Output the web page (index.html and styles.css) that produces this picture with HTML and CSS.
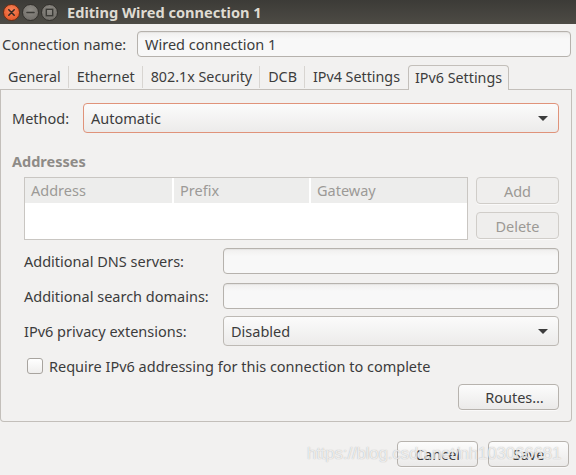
FILE: index.html
```html
<!DOCTYPE html>
<html>
<head>
<meta charset="utf-8">
<title>Editing Wired connection 1</title>
<link rel="stylesheet" href="styles.css">
</head>
<body>
<div class="window">
  <div class="titlebar">
    <div class="wm-buttons">
      <span class="wm close"><svg width="17" height="17" viewBox="0 0 17 17"><path d="M5.8 5.8 L11.2 11.2 M11.2 5.8 L5.8 11.2" stroke="#3a2a22" stroke-width="1.6" stroke-linecap="round"/></svg></span>
      <span class="wm"><svg width="17" height="17" viewBox="0 0 17 17"><path d="M5 8.5 H12" stroke="#3b3a36" stroke-width="1.6" stroke-linecap="round"/></svg></span>
      <span class="wm"><svg width="17" height="17" viewBox="0 0 17 17"><rect x="5.3" y="5.3" width="6.4" height="6.4" fill="none" stroke="#3b3a36" stroke-width="1.4"/></svg></span>
    </div>
    <div class="title">Editing Wired connection 1</div>
  </div>

  <div class="content">
    <div class="name-row">
      <span class="name-label">Connection name:</span>
      <div class="entry name-entry">Wired connection 1</div>
    </div>

    <div class="tabs">
      <div class="tab">General</div>
      <span class="tab-sep"></span>
      <div class="tab">Ethernet</div>
      <span class="tab-sep"></span>
      <div class="tab">802.1x Security</div>
      <span class="tab-sep"></span>
      <div class="tab">DCB</div>
      <span class="tab-sep"></span>
      <div class="tab">IPv4 Settings</div>
      <div class="tab active">IPv6 Settings</div>
    </div>

    <div class="panel">
      <div class="method-row">
        <span class="method-label">Method:</span>
        <div class="combo focused"><span>Automatic</span><span class="arrow"></span></div>
      </div>

      <div class="section-title">Addresses</div>

      <div class="addresses">
        <div class="table">
          <div class="thead">
            <div class="th col-addr">Address</div>
            <div class="th col-prefix">Prefix</div>
            <div class="th col-gw">Gateway</div>
          </div>
          <div class="tbody"></div>
        </div>
        <div class="side-buttons">
          <div class="btn disabled">Add</div>
          <div class="btn disabled">Delete</div>
        </div>
      </div>

      <div class="form-grid">
        <span class="form-label">Additional DNS servers:</span>
        <div class="entry"></div>
        <span class="form-label">Additional search domains:</span>
        <div class="entry"></div>
        <span class="form-label">IPv6 privacy extensions:</span>
        <div class="combo"><span>Disabled</span><span class="arrow"></span></div>
      </div>

      <div class="check-row">
        <span class="checkbox"></span>
        <span>Require IPv6 addressing for this connection to complete</span>
      </div>

      <div class="routes-row">
        <div class="btn routes">Routes…</div>
      </div>
    </div>

    <div class="dialog-buttons">
      <div class="btn dlg">Cancel</div>
      <div class="btn dlg">Save</div>
    </div>
  </div>
  <div class="watermark">https://blog.csdn.net/nh103066681</div>
</div>
</body>
</html>
```
FILE: styles.css
```css
* { box-sizing: border-box; }
html, body { margin: 0; padding: 0; }
body {
  width: 576px;
  height: 475px;
  overflow: hidden;
  background: #f2f1f0;
  font-family: "Noto Sans", "Open Sans", sans-serif;
  font-size: 14.5px;
  color: #3c3c3c;
}
.window { position: relative; width: 576px; height: 475px; overflow: hidden; }

.titlebar {
  height: 24px;
  background: linear-gradient(#3c3b37, #4d4b45);
  display: flex;
  align-items: center;
}
.wm-buttons { display: flex; gap: 2px; padding-left: 3px; }
.wm {
  width: 17px; height: 17px;
  border-radius: 50%;
  background: radial-gradient(circle at 50% 35%, #8f8c86, #6a6762);
  border: 1px solid #33312d;
  display: flex; align-items: center; justify-content: center;
}
.wm svg { display: block; margin: -1px; }
.wm.close { background: radial-gradient(circle at 50% 35%, #f7845a, #e2501f); border-color: #6b2d14; }
.title {
  margin-left: 9px;
  color: #dfdbd2;
  font-weight: bold;
  font-size: 14.6px;
}

.content { padding: 0 5px 0 0; }

.name-row {
  display: flex;
  align-items: center;
  margin-top: 7px;
  padding-left: 2px;
}
.name-label { width: 135px; }
.entry {
  height: 26px;
  border: 1px solid #b6b2ad;
  border-radius: 4px;
  background: linear-gradient(#f0efee, #f8f8f8 30%, #f8f8f8);
  box-shadow: inset 0 1px 1px rgba(0,0,0,0.05);
  padding: 0 7px;
  display: flex; align-items: center;
}
.name-entry { flex: 1; }

.tabs {
  display: flex;
  align-items: flex-end;
  margin-top: 8px;
  height: 25px;
  border-bottom: 1px solid #c3bfba;
  margin-right: -1px;
  font-size: 14.3px;
}
.tab {
  height: 24px;
  padding: 0 7px 1px 8px;
  display: flex; align-items: center;
}
.tab-sep { width: 1px; height: 22px; background: #d8d5d1; align-self: center; }
.tab.active {
  height: 25px;
  margin-bottom: -1px;
  margin-left: 1px;
  padding: 0 6px 1px 6px;
  border: 1px solid #c3bfba;
  border-bottom: none;
  border-radius: 4px 4px 0 0;
  background: #f2f1f0;
}

.panel {
  border: 1px solid #c3bfba;
  border-top: none;
  border-radius: 0 0 4px 4px;
  margin-right: -1px;
  padding: 13px 12px 11px 11px;
}

.method-row { display: flex; align-items: center; }
.method-label { width: 71px; }
.combo {
  flex: 1;
  height: 30px;
  border: 1px solid #bdb9b4;
  border-radius: 4px;
  background: linear-gradient(#fbfbfb, #ecebea);
  display: flex; align-items: center; justify-content: space-between;
  padding: 0 10px 0 7px;
}
.combo.focused { border-color: #e0937a; }
.arrow {
  width: 0; height: 0;
  border-left: 5px solid transparent;
  border-right: 5px solid transparent;
  border-top: 5px solid #3c3c3c;
}

.section-title {
  margin-top: 19px;
  line-height: 18px;
  font-weight: bold;
  color: #8e8b87;
}

.addresses {
  display: flex;
  gap: 8px;
  margin-top: 7px;
  padding-left: 12px;
}
.table {
  width: 444px;
  height: 63px;
  border: 1px solid #c9c6c2;
  background: #fff;
  display: flex; flex-direction: column;
}
.thead {
  display: flex;
  height: 25px;
  background: #ededec;
  color: #9c9a97;
}
.th { display: flex; align-items: center; padding-left: 6px; padding-bottom: 1px; }
.col-addr { width: 149px; border-right: 2px solid #fff; }
.col-prefix { width: 137px; border-right: 2px solid #fff; }
.col-gw { flex: 1; }
.side-buttons { display: flex; flex-direction: column; gap: 8px; width: 83px; }

.btn {
  height: 27px;
  border: 1px solid #b7b3ae;
  border-radius: 4px;
  background: linear-gradient(#fcfcfc, #ebeae9);
  box-shadow: 0 1px 0 rgba(255,255,255,0.6);
  display: flex; align-items: center; justify-content: center;
}
.btn.disabled {
  border-color: #d0cdc9;
  background: #efeeed;
  color: #9c9995;
}

.form-grid {
  display: grid;
  grid-template-columns: 199px 1fr;
  grid-auto-rows: 26px;
  row-gap: 9px;
  align-items: center;
  margin-top: 8px;
  padding-left: 12px;
}
.form-grid .combo { height: 30px; }
.form-grid .entry { height: 26px; }

.check-row {
  display: flex;
  align-items: center;
  gap: 6px;
  margin-top: 12px;
  padding-left: 15px;
}
.checkbox {
  width: 16px; height: 16px;
  border: 1px solid #a8a49f;
  border-radius: 3px;
  background: linear-gradient(#ffffff, #efeeed);
}

.routes-row {
  display: flex;
  justify-content: flex-end;
  margin-top: 8px;
}
.btn.routes { width: 101px; height: 26px; padding-left: 12px; }

.dialog-buttons {
  display: flex;
  justify-content: flex-end;
  gap: 10px;
  margin-top: 19px;
  padding-right: 2px;
}
.btn.dlg { width: 81px; height: 26px; }

.watermark {
  position: absolute;
  left: 307px;
  top: 444px;
  width: 264px;
  white-space: nowrap;
  font-family: "Liberation Sans", Arial, sans-serif;
  font-size: 17px;
  color: rgba(255,255,255,0.75);
  text-shadow: 0 0 1px rgba(120,120,120,0.6);
  letter-spacing: -0.2px;
  pointer-events: none;
}
```
